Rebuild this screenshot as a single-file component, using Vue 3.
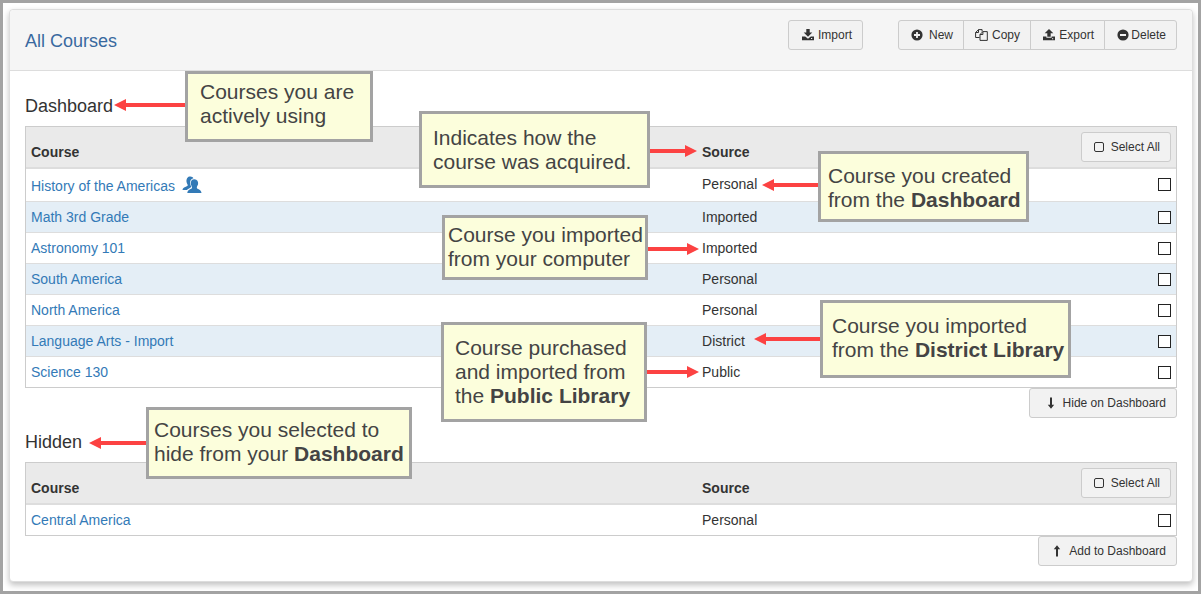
<script setup>
import { reactive } from 'vue'

const sections = reactive([
  {
    id: 'dashboard',
    title: 'Dashboard',
    action: 'Hide on Dashboard',
    arrow: 'down',
    courses: [
      { name: 'History of the Americas', source: 'Personal', shared: true, checked: false },
      { name: 'Math 3rd Grade', source: 'Imported', checked: false },
      { name: 'Astronomy 101', source: 'Imported', checked: false },
      { name: 'South America', source: 'Personal', checked: false },
      { name: 'North America', source: 'Personal', checked: false },
      { name: 'Language Arts - Import', source: 'District', checked: false },
      { name: 'Science 130', source: 'Public', checked: false }
    ]
  },
  {
    id: 'hidden',
    title: 'Hidden',
    action: 'Add to Dashboard',
    arrow: 'up',
    courses: [{ name: 'Central America', source: 'Personal', checked: false }]
  }
])

// Callouts: box geometry, inner text offset and lines of [plain, bold] text.
const notes = [
  { x: 185, y: 71, w: 188, h: 71, px: 12, py: 6, lines: [['Courses you are'], ['actively using']] },
  { x: 419, y: 111, w: 231, h: 77, px: 11, py: 12, lines: [['Indicates how the'], ['course was acquired.']] },
  { x: 818, y: 151, w: 211, h: 71, px: 7, py: 10, lines: [['Course you created'], ['from the ', 'Dashboard']] },
  { x: 442, y: 215, w: 206, h: 65, px: 3, py: 5, lines: [['Course you imported'], ['from your computer']] },
  { x: 820, y: 300, w: 251, h: 78, px: 9, py: 11, lines: [['Course you imported'], ['from the ', 'District Library']] },
  { x: 441, y: 322, w: 206, h: 100, px: 11, py: 11, lines: [['Course purchased'], ['and imported from'], ['the ', 'Public Library']] },
  { x: 146, y: 407, w: 266, h: 72, px: 5, py: 8, lines: [['Courses you selected to'], ['hide from your ', 'Dashboard']] }
]

const arrows = [
  { from: 185, to: 114, y: 105 },
  { from: 650, to: 697, y: 151 },
  { from: 818, to: 762, y: 185 },
  { from: 648, to: 699, y: 249 },
  { from: 820, to: 754, y: 339 },
  { from: 647, to: 699, y: 372 },
  { from: 146, to: 89, y: 443 }
]

const noteStyle = (n) => ({
  left: n.x + 'px',
  top: n.y + 'px',
  width: n.w + 'px',
  height: n.h + 'px',
  padding: `${n.py}px 0 0 ${n.px}px`
})
const shaft = (a) => {
  const dir = Math.sign(a.to - a.from)
  return `M${a.from} ${a.y}H${a.to - dir * 10}`
}
const head = (a) => {
  const base = a.to - Math.sign(a.to - a.from) * 12
  return `M${a.to} ${a.y}L${base} ${a.y - 6}V${a.y + 6}Z`
}
const toggleAll = (s) => {
  const on = s.courses.some((c) => !c.checked)
  s.courses.forEach((c) => (c.checked = on))
}
</script>

<template>
  <div class="page">
    <main class="card">
      <header class="bar">
        <h1>All Courses</h1>
        <div class="tools">
          <button type="button" class="btn import">
            <svg class="icon" viewBox="0 0 12 12" aria-hidden="true">
              <path d="M4.300 0h3.400v3.500h2.600L6 7.800 1.700 3.500h2.600z" />
              <path d="M0 7.500h3.200L6 9.700l2.800-2.200H12v3.800H0zM9 9v1h1.200V9z" fill-rule="evenodd" />
            </svg>
            Import
          </button>
          <div class="group">
            <button type="button" class="btn new">
              <svg class="icon" viewBox="0 0 12 12" aria-hidden="true">
                <path d="M6 .4a5.600 5.600 0 1 0 0 11.200A5.600 5.600 0 0 0 6 .4zM5.100 3h1.800v2.100H9v1.800H6.900V9H5.100V6.900H3V5.100h2.100z" fill-rule="evenodd" />
              </svg>
              New
            </button>
            <button type="button" class="btn copy">
              <svg class="icon wide" viewBox="0 0 13 12" aria-hidden="true">
                <path class="line" d="M4.600 8.500H.6V3.500L3.500.6h3.600v2M3.500.6v2.900H.6M5 5.500L7.900 2.600h4.400v8.800H5zM7.900 2.600v2.900H5" />
              </svg>
              Copy
            </button>
            <button type="button" class="btn export">
              <svg class="icon" viewBox="0 0 12 12" aria-hidden="true">
                <path d="M4.300 7.800h3.400V4.300h2.600L6 0 1.700 4.300h2.600z" />
                <path d="M0 7.500h3.400v1.300h5.200V7.500H12v3.800H0zM9 9.300v1h1.200v-1z" fill-rule="evenodd" />
              </svg>
              Export
            </button>
            <button type="button" class="btn delete">
              <svg class="icon" viewBox="0 0 12 12" aria-hidden="true">
                <path d="M6 .4a5.600 5.600 0 1 0 0 11.200A5.600 5.600 0 0 0 6 .4zM3 5.100h6v1.800H3z" fill-rule="evenodd" />
              </svg>
              Delete
            </button>
          </div>
        </div>
      </header>

      <div class="body">
        <section v-for="s in sections" :key="s.id" class="section">
          <h2 :id="s.id">{{ s.title }}</h2>
          <table :aria-labelledby="s.id">
            <colgroup>
              <col class="c-name" />
              <col class="c-source" />
              <col class="c-check" />
            </colgroup>
            <thead>
              <tr>
                <th scope="col">Course</th>
                <th scope="col">Source</th>
                <th scope="col" class="end">
                  <button type="button" class="btn select" @click="toggleAll(s)">
                    <svg class="icon" viewBox="0 0 12 12" aria-hidden="true">
                      <rect class="line" x="1.500" y="1.500" width="9" height="9" rx="1.500" />
                    </svg>
                    Select All
                  </button>
                </th>
              </tr>
            </thead>
            <tbody>
              <tr v-for="c in s.courses" :key="c.name" :class="{ shared: c.shared }">
                <td>
                  <a href="#">{{ c.name }}<svg v-if="c.shared" class="people" viewBox="0 0 20 18" role="img" aria-label="Shared">
                      <path d="M7.500.5C9.300.2 11 1 11.400 2.300 8.800 3 7.700 5.300 8.200 7.900c.2 1.200.6 2 1.100 2.700-.5 1.500-2.700 1.800-4.500 3.400H.5c.4-2.700 3.500-2.800 5-4.200.6-.6 0-1.500-.5-2.400C3.800 4.700 4.600 1.100 7.500.5z" />
                      <path d="M12.500 3.200c2.700 0 3.900 2.200 3.600 4.700-.2 1.500-1.300 2.300-1.300 3.500 0 2 4.400 1.500 4.700 5.600H5.300c.2-4 4.700-3.600 4.700-5.600 0-1.200-1-2.100-1.200-3.500-.3-2.700 1-4.700 3.700-4.700z" />
                    </svg></a>
                </td>
                <td>{{ c.source }}</td>
                <td class="end">
                  <input v-model="c.checked" type="checkbox" :aria-label="'Select ' + c.name" />
                </td>
              </tr>
            </tbody>
          </table>
          <div class="foot">
            <button type="button" class="btn move" :class="s.id">
              <svg class="arrow" :class="s.arrow" viewBox="0 0 8 12" aria-hidden="true">
                <path d="M3 .5h2v7.300h2.200L4 11.700.8 7.800H3z" />
              </svg>
              {{ s.action }}
            </button>
          </div>
        </section>
      </div>
    </main>

    <svg class="arrows" aria-hidden="true">
      <g v-for="a in arrows" :key="a.y">
        <path class="shaft" :d="shaft(a)" />
        <path class="head" :d="head(a)" />
      </g>
    </svg>
    <aside v-for="n in notes" :key="n.y" class="note" :style="noteStyle(n)">
      <div v-for="(l, i) in n.lines" :key="i">{{ l[0] }}<strong v-if="l[1]">{{ l[1] }}</strong></div>
    </aside>
  </div>
</template>

<style>
body {
  margin: 0;
}
</style>

<style scoped>
.page,
.page * {
  box-sizing: border-box;
}
.page {
  position: relative;
  min-height: 100vh;
  padding: 6px 5px 9px 6px;
  border: 3px solid #a3a3a3;
  background: #fff;
  color: #333;
  font: 14px/20px "Liberation Sans", Arial, sans-serif;
}
.card {
  border: 1px solid #ddd;
  border-radius: 4px;
  background: #fff;
  box-shadow: 0 3px 6px rgba(0, 0, 0, 0.25);
}
.bar {
  display: flex;
  justify-content: space-between;
  align-items: flex-start;
  padding: 10px 15px 19px;
  border-bottom: 1px solid #ddd;
  border-radius: 4px 4px 0 0;
  background: #f5f5f5;
}
h1,
h2 {
  margin: 0;
  font-size: 18px;
  line-height: 20px;
  font-weight: normal;
}
h1 {
  padding-top: 11px;
  color: #39699f;
}
.tools {
  display: flex;
  gap: 35px;
}
.group {
  display: flex;
}
.btn {
  display: inline-flex;
  align-items: center;
  justify-content: flex-end;
  gap: 4px;
  height: 30px;
  margin: 0;
  padding: 0 10px;
  border: 1px solid #ccc;
  border-radius: 3px;
  background: #f2f2f2;
  color: #333;
  font: 12px/18px "Liberation Sans", Arial, sans-serif;
  white-space: nowrap;
}
.group .btn {
  border-radius: 0;
}
.group .btn + .btn {
  margin-left: -1px;
}
.group .btn:first-child {
  border-radius: 3px 0 0 3px;
}
.group .btn:last-child {
  border-radius: 0 3px 3px 0;
}
.import {
  width: 75px;
}
.new {
  width: 66px;
  gap: 6px;
}
.copy {
  width: 68px;
}
.export {
  width: 75px;
}
.delete {
  width: 73px;
  gap: 2px;
}
.select {
  width: 90px;
  gap: 6px;
}
.move {
  gap: 8px;
}
.move.dashboard {
  width: 148px;
}
.move.hidden {
  width: 139px;
}
.icon {
  flex: none;
  width: 12px;
  height: 12px;
  fill: #333;
}
.icon.wide {
  width: 13px;
}
.icon .line {
  fill: none;
  stroke: #333;
  stroke-width: 1;
}
.arrow {
  width: 8px;
  height: 12px;
  fill: #333;
}
.arrow.up {
  transform: rotate(180deg);
}
.body {
  padding: 25px 15px 15px;
}
.section + .section {
  margin-top: 14px;
}
h2 {
  margin-bottom: 10px;
}
table {
  width: 100%;
  table-layout: fixed;
  border: 1px solid #ccc;
  border-collapse: separate;
  border-spacing: 0;
}
.c-name {
  width: 58.35%;
}
.c-check {
  width: 110px;
}
th,
td {
  padding: 5px;
  text-align: left;
}
th {
  border-bottom: 2px solid #ddd;
  background: #eaeaea;
  vertical-align: bottom;
}
th .btn {
  font-weight: normal;
  vertical-align: bottom;
}
td {
  border-bottom: 1px solid #ddd;
  vertical-align: top;
}
tr:last-child td {
  border-bottom: 0;
}
tbody tr:nth-child(even) td {
  background: #e4eef6;
}
.shared td {
  height: 33px;
}
.shared td:first-child {
  padding-top: 7px;
}
.end {
  text-align: right;
}
td.end {
  vertical-align: middle;
}
.shared td.end {
  padding-bottom: 7px;
}
a {
  color: #337ab7;
  text-decoration: none;
}
.people {
  width: 20px;
  height: 18px;
  margin: -3px 0 -2px 7px;
  fill: #337ab7;
  vertical-align: -1px;
}
input {
  display: block;
  appearance: none;
  width: 13px;
  height: 13px;
  margin: 0 0 0 auto;
  border: 1px solid #222;
  background: #fff;
}
input:checked {
  background: #337ab7;
}
.foot {
  display: flex;
  justify-content: flex-end;
}
.arrows {
  position: absolute;
  left: -3px;
  top: -3px;
  width: 1px;
  height: 1px;
  overflow: visible;
  pointer-events: none;
}
.shaft {
  fill: none;
  stroke: #fc4242;
  stroke-width: 4;
}
.head {
  fill: #fc4242;
}
.note {
  position: absolute;
  margin: -3px 0 0 -3px;
  border: 3px solid #a3a3a3;
  background: #fcfedc;
  color: #444;
  font-size: 21px;
  line-height: 24px;
  white-space: pre;
}
</style>
